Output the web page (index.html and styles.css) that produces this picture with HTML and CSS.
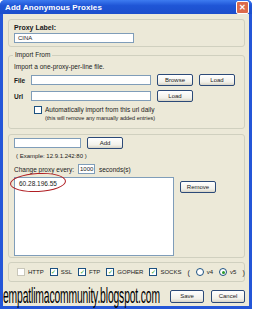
FILE: index.html
```html
<!DOCTYPE html>
<html lang="en">
<head>
  <meta charset="UTF-8" />
  <title>Add Anonymous Proxies</title>
  <link rel="stylesheet" href="styles.css">
</head>
<body>
  <div class="window">
    <div class="titlebar">
      <span class="title">Add Anonymous Proxies</span>
      <span class="close">&#x2715;</span>
    </div>
    <div class="client">

      <div class="group label-group">
        <div class="bold">Proxy Label:</div>
        <div class="field wide">CINA</div>
      </div>

      <div class="group import-group">
        <span class="legend">Import From</span>
        <div class="hint">Import a one-proxy-per-line file.</div>
        <div class="row">
          <span class="bold key">File</span>
          <div class="field path"></div>
          <div class="btn">Browse</div>
          <div class="btn">Load</div>
        </div>
        <div class="row">
          <span class="bold key">Url</span>
          <div class="field path"></div>
          <div class="btn">Load</div>
        </div>
        <div class="auto">
          <span class="check"></span>
          <div>
            <div>Automatically import from this url daily</div>
            <div class="tiny">(this will remove any manually added entries)</div>
          </div>
        </div>
      </div>

      <div class="group list-group">
        <div class="row">
          <div class="field small"></div>
          <div class="btn">Add</div>
        </div>
        <div class="example">( Example: 12.9.1.242:80 )</div>
        <div class="row every">
          <span>Change proxy every:</span>
          <div class="field secs">1000</div>
          <span>seconds(s)</span>
        </div>
        <div class="list-row">
          <div class="listbox">
            <div class="item">60.28.196.55</div>
            <div class="ring"></div>
          </div>
          <div class="btn remove">Remove</div>
        </div>
      </div>

      <div class="group proto-group">
        <span class="opt"><span class="check off"></span>HTTP</span>
        <span class="opt"><span class="check on">&#x2713;</span>SSL</span>
        <span class="opt"><span class="check on">&#x2713;</span>FTP</span>
        <span class="opt"><span class="check on">&#x2713;</span>GOPHER</span>
        <span class="opt"><span class="check on">&#x2713;</span>SOCKS</span>
        <span class="paren">(</span>
        <span class="opt"><span class="radio"></span>v4</span>
        <span class="opt"><span class="radio sel"></span>v5</span>
        <span class="paren">)</span>
      </div>

      <div class="footer">
        <span class="mark">empatlimacommunity.blogspot.com</span>
        <div class="btn">Save</div>
        <div class="btn">Cancel</div>
      </div>

    </div>
  </div>
</body>
</html>
```

FILE: styles.css
```css
body {
  margin: 0;
  background: #fff;
  font-family: 'Liberation Sans', Arial, sans-serif;
  font-size: 6.5px;
  color: #1a1a1a;
}

.window {
  width: 252px;
  height: 309px;
  background: #2456d8;
  border-radius: 5px 5px 0 0;
  display: flex;
  flex-direction: column;
  box-sizing: border-box;
  padding: 0 3px 3px 3px;
}

.titlebar {
  height: 17px;
  display: flex;
  align-items: center;
  justify-content: space-between;
  background: linear-gradient(#3d7bf0, #1f55d6 40%, #1c4fcc);
  margin: 0 -3px;
  padding: 0 3px 0 5px;
  border-radius: 5px 5px 0 0;
}

.title {
  color: #fff;
  font-weight: bold;
  font-size: 8px;
  letter-spacing: 0.1px;
}

.close {
  width: 11px;
  height: 11px;
  background: #dc6a4b;
  border: 1px solid #fff;
  border-radius: 2px;
  color: #fff;
  font-size: 8px;
  font-weight: bold;
  display: flex;
  align-items: center;
  justify-content: center;
}

.client {
  flex: 1;
  background: #ece9d8;
  padding: 5px 4px 0 5px;
  display: flex;
  flex-direction: column;
}

.group {
  border: 1px solid #d0d0bf;
  border-radius: 3px;
  position: relative;
  box-sizing: border-box;
}

.bold {
  font-weight: bold;
}

.field {
  background: #fff;
  border: 1px solid #7f9db9;
  height: 10px;
  box-sizing: border-box;
  font-size: 6px;
  line-height: 8px;
  padding-left: 3px;
}

.btn {
  width: 36px;
  height: 12px;
  box-sizing: border-box;
  border: 1px solid #2c4a78;
  border-radius: 2px;
  background: linear-gradient(#fff, #f2f1ea 70%, #d8d4c6);
  display: flex;
  align-items: center;
  justify-content: center;
  font-size: 6px;
}

.row {
  display: flex;
  align-items: center;
  gap: 6px;
}

/* proxy label */
.label-group {
  height: 28px;
  padding: 4px 0 0 5px;
  font-size: 7px;
}

.field.wide {
  width: 120px;
  margin-top: 2px;
}

/* import */
.import-group {
  margin-top: 8px;
  height: 74px;
  padding: 7px 0 0 5px;
}

.legend {
  position: absolute;
  top: -5px;
  left: 4px;
  background: #ece9d8;
  padding: 0 2px;
}

.hint {
  margin-bottom: 4px;
}

.import-group .row {
  margin-bottom: 4px;
}

.key {
  width: 11px;
  font-size: 6.5px;
}

.field.path {
  width: 120px;
}

.auto {
  display: flex;
  gap: 3px;
  margin-left: 20px;
  margin-top: 2px;
}

.tiny {
  font-size: 5.5px;
  margin-top: 2px;
}

.check {
  width: 6px;
  height: 6px;
  border: 1px solid #1c5180;
  background: #fff;
  display: inline-flex;
  align-items: center;
  justify-content: center;
  font-size: 6px;
  color: #21a121;
  line-height: 1;
  flex-shrink: 0;
}

/* list */
.list-group {
  margin-top: 5px;
  height: 124px;
  padding: 2px 0 0 5px;
}

.field.small {
  width: 67px;
}

.example {
  margin: 4px 0 0 2px;
  font-size: 6px;
}

.every {
  margin-top: 5px;
  gap: 4px;
}

.field.secs {
  width: 17px;
  padding-left: 1px;
  font-size: 6px;
}

.list-row {
  display: flex;
  gap: 6px;
  margin-top: 3px;
}

.listbox {
  width: 160px;
  height: 79px;
  background: #fff;
  border: 1px solid #7f9db9;
  box-sizing: border-box;
  position: relative;
}

.item {
  padding: 2px 0 0 4px;
  font-size: 6.5px;
}

.ring {
  position: absolute;
  left: -5px;
  top: -5px;
  width: 54px;
  height: 17px;
  border: 1.5px solid #b01f24;
  border-radius: 50%;
  transform: rotate(-3deg);
}

.remove {
  margin-top: 4px;
}

/* protocols */
.proto-group {
  margin-top: 4px;
  height: 20px;
  display: flex;
  align-items: center;
  padding-left: 8px;
  gap: 6px;
  font-size: 6px;
}

.opt {
  display: inline-flex;
  align-items: center;
  gap: 3px;
}

.check.off {
  border-color: #c9c7ba;
}

.paren {
  font-size: 7px;
}

.radio {
  width: 6px;
  height: 6px;
  border: 1px solid #1c5180;
  border-radius: 50%;
  background: #fff;
  display: inline-flex;
  align-items: center;
  justify-content: center;
}

.radio.sel::after {
  content: '';
  width: 3px;
  height: 3px;
  border-radius: 50%;
  background: #2a9a2a;
}

/* footer */
.footer {
  display: flex;
  align-items: center;
  gap: 7px;
  margin-top: 4px;
  margin-left: -5px;
}

.mark {
  display: inline-block;
  width: 160px;
  font-family: 'Liberation Sans', Arial, sans-serif;
  font-size: 22px;
  line-height: 20px;
  color: #000;
  white-space: nowrap;
  transform: scaleX(0.47);
  transform-origin: left center;
  letter-spacing: -0.3px;
}

.footer .btn {
  height: 13px;
}
```
